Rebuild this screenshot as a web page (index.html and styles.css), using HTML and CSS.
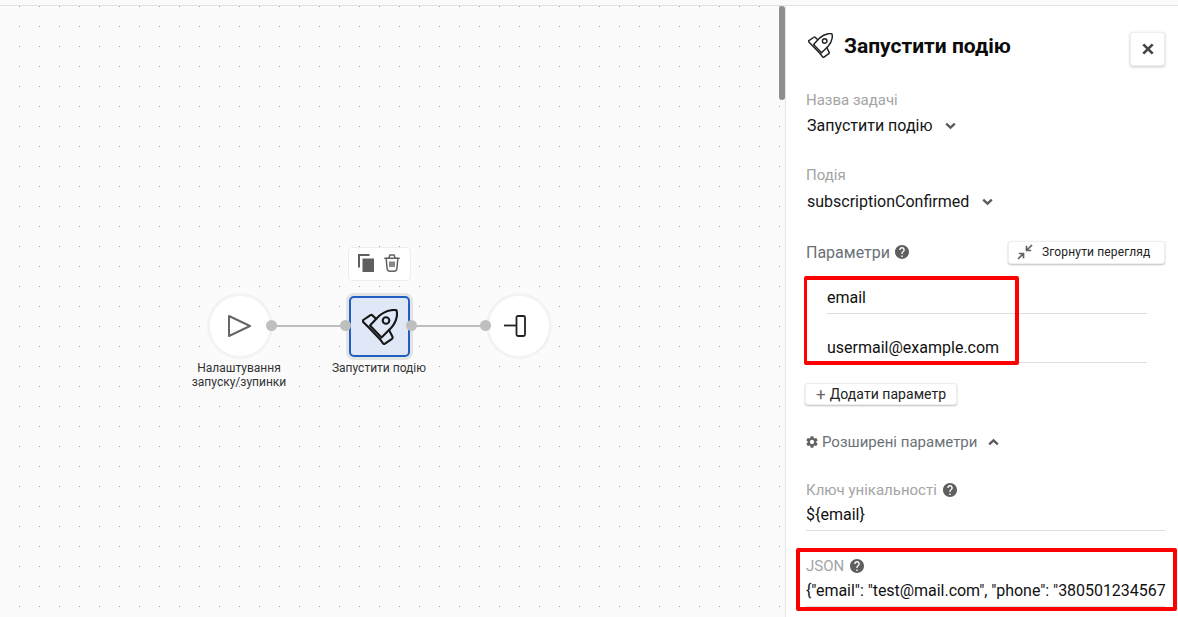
FILE: index.html
```html
<!DOCTYPE html>
<html lang="uk">
<head>
<meta charset="utf-8">
<title>Запустити подію</title>
<link rel="stylesheet" href="styles.css">
</head>
<body>
<svg class="defs" width="0" height="0" aria-hidden="true">
  <defs>
    <symbol id="rocket" viewBox="0 0 36 36">
      <g fill="none" stroke="currentColor" stroke-width="2.100" stroke-linecap="round" stroke-linejoin="round">
        <path d="M34.500 1.200C33 .8 31 .7 29 1.200 24.500 2 20.500 3.800 17 7L8 16.500 19.500 28.500 29 19C32 15.800 34 12 34.800 7.500 35.200 5.200 35 3 34.500 1.200Z"/>
        <path d="M14 9.800 10.300 6.200C9.700 5.700 9.100 5.700 8.500 6.100L1.300 11C.6 11.600.6 12.300 1.200 12.900L6.500 18.300 18 30.200"/>
        <path d="M27 21 30.500 27.800C30.800 28.600 30.600 29.300 30 29.800L23 34.700C22.300 35.200 21.600 35.100 21 34.400L18 30.200"/>
        <circle cx="24" cy="11.500" r="3.300"/>
      </g>
    </symbol>
    <symbol id="help" viewBox="2 2 20 20">
      <path fill="currentColor" d="M12 2C6.480 2 2 6.480 2 12s4.480 10 10 10 10-4.480 10-10S17.520 2 12 2zm1 17h-2v-2h2v2zm2.070-7.750l-.9.920C13.450 12.900 13 13.500 13 15h-2v-.5c0-1.100.45-2.100 1.170-2.830l1.240-1.260c.37-.36.59-.86.59-1.410 0-1.100-.9-2-2-2s-2 .9-2 2H8c0-2.210 1.790-4 4-4s4 1.790 4 4c0 .88-.36 1.680-.93 2.250z"/>
    </symbol>
    <symbol id="chev" viewBox="0 0 12 8">
      <path fill="none" stroke="currentColor" stroke-width="2.600" d="M1.300 1.500 6 5.800l4.700-4.300"/>
    </symbol>
  </defs>
</svg>

<div class="topline"></div>
<main class="app">
  <section class="canvas">
    <div class="toolbar">
      <svg class="tool-icon" viewBox="0 0 16 18"><path fill="#5f5f5f" d="M0 0h11.500v2H2v11.500H0z"/><path fill="#5f5f5f" d="M4.500 4.500H16V18H4.500z"/></svg>
      <svg class="tool-icon" viewBox="0 0 16 18"><g fill="none" stroke="#5f5f5f" stroke-width="1.500" stroke-linecap="round" stroke-linejoin="round"><path d="M.8 4.200h14.400"/><path d="M5 4 5.800 1h4.400L11 4"/><path d="M2.200 4.500 3 14c.2 1.900 1.200 3.200 3 3.200h4c1.800 0 2.800-1.300 3-3.200l.8-9.500"/><path d="M6 8v4.500M8 8v4.500M10 8v4.500"/></g></svg>
    </div>

    <span class="edge edge-a"></span>
    <span class="edge edge-b"></span>

    <div class="node circle start">
      <svg class="play" viewBox="0 0 23 22"><path fill="none" stroke="#666" stroke-width="2" stroke-linejoin="round" d="M1 1 22 11 1 21z"/></svg>
    </div>
    <div class="node square">
      <svg class="rocket-big"><use href="#rocket"/></svg>
    </div>
    <div class="node circle end">
      <svg class="stop" viewBox="0 0 22 22"><g fill="none" stroke="#222" stroke-width="1.800" stroke-linejoin="round"><path d="M0 10.500h12.500"/><rect x="12.500" y="1" width="8.500" height="20" rx="1.500"/></g></svg>
    </div>

    <span class="port p1"></span>
    <span class="port p2"></span>
    <span class="port p3"></span>
    <span class="port p4"></span>

    <div class="node-label l1">Налаштування<br>запуску/зупинки</div>
    <div class="node-label l2">Запустити подію</div>

    <div class="scrollbar"></div>
  </section>

  <aside class="panel">
    <header class="panel-head">
      <svg class="rocket-small"><use href="#rocket"/></svg>
      <h1 class="panel-title">Запустити подію</h1>
      <button class="close" type="button" aria-label="Закрити">
        <svg viewBox="0 0 12 12" class="close-icon"><path fill="none" stroke="#444" stroke-width="2.600" d="M1.300 1.300l9.400 9.400M10.700 1.300l-9.400 9.400"/></svg>
      </button>
    </header>

    <div class="field first">
      <div class="label">Назва задачі</div>
      <div class="select">Запустити подію <svg class="chev"><use href="#chev"/></svg></div>
    </div>

    <div class="field second">
      <div class="label">Подія</div>
      <div class="select">subscriptionConfirmed <svg class="chev"><use href="#chev"/></svg></div>
    </div>

    <div class="params-head">
      <span class="params-title">Параметри</span>
      <svg class="help"><use href="#help"/></svg>
      <button class="collapse" type="button">
        <svg class="collapse-icon" viewBox="0 0 16 16"><g fill="none" stroke="#616161" stroke-width="1.700"><path d="M1 15 6.500 9.500M1.800 9.500h4.700v4.700"/><path d="M15 1 9.500 6.500M14.200 6.500H9.500V1.800"/></g></svg>
        Згорнути перегляд
      </button>
    </div>

    <div class="param-list">
      <div class="param">email</div>
      <div class="param">usermail@example.com</div>
    </div>

    <button class="add" type="button"><span class="plus">+</span>Додати параметр</button>

    <div class="advanced">
      <svg class="gear" viewBox="2 2 20 20"><path fill="#616161" d="M19.140 12.940c.04-.3.06-.61.06-.94 0-.32-.02-.64-.07-.94l2.030-1.580c.18-.14.23-.41.12-.61l-1.920-3.320c-.12-.22-.37-.29-.59-.22l-2.390.96c-.5-.38-1.030-.7-1.620-.94L14.400 2.810c-.04-.24-.24-.41-.48-.41h-3.840c-.24 0-.43.17-.47.41L9.250 5.350c-.59.24-1.130.57-1.620.94L5.240 5.330c-.22-.08-.47 0-.59.22L2.740 8.870c-.12.21-.08.47.12.61l2.030 1.580c-.05.3-.09.63-.09.94s.02.64.07.94l-2.030 1.580c-.18.14-.23.41-.12.61l1.920 3.320c.12.22.37.29.59.22l2.390-.96c.5.38 1.030.7 1.620.94l.36 2.540c.05.24.24.41.48.41h3.840c.24 0 .44-.17.47-.41l.36-2.540c.59-.24 1.130-.56 1.620-.94l2.390.96c.22.08.47 0 .59-.22l1.920-3.320c.12-.22.07-.47-.12-.61l-2.010-1.580zM12 15.600c-1.980 0-3.600-1.620-3.600-3.600s1.620-3.600 3.600-3.600 3.600 1.620 3.600 3.600-1.620 3.600-3.600 3.600z"/></svg>
      <span>Розширені параметри</span>
      <svg class="chev up"><use href="#chev"/></svg>
    </div>

    <div class="field key">
      <div class="label">Ключ унікальності <svg class="help"><use href="#help"/></svg></div>
      <div class="input">${email}</div>
    </div>

    <div class="field json">
      <div class="label">JSON <svg class="help"><use href="#help"/></svg></div>
      <div class="input">{"email": "test@mail.com", "phone": "380501234567</div>
    </div>
  </aside>
</main>

<div class="mark mark-params"></div>
<div class="mark mark-json"></div>
</body>
</html>
```

FILE: styles.css
```css
* { box-sizing: border-box; }

html, body {
  margin: 0;
  height: 100%;
  overflow: hidden;
}

body {
  position: relative;
  display: flex;
  flex-direction: column;
  background: #fff;
  font-family: Roboto, "Liberation Sans", sans-serif;
  color: #111;
}

.defs { position: absolute; }

.topline {
  height: 6px;
  flex: none;
  background: #fbfbfb;
  border-bottom: 1px solid #e2e2e2;
}

.app {
  flex: 1;
  display: flex;
  min-height: 0;
}

/* canvas */
.canvas {
  position: relative;
  flex: none;
  width: 786px;
  border-right: 1px solid #e4e4e4;
  background-color: #fbfbfb;
  background-image: radial-gradient(circle at 0.5px 0.5px, #9a9a9a 0.6px, transparent 0.7px);
  background-size: 20px 20px;
  background-position: 19px 0;
}

.scrollbar {
  position: absolute;
  left: 779px;
  top: 0;
  width: 6px;
  height: 94px;
  border-radius: 3px;
  background: #8e8e8e;
}

.toolbar {
  position: absolute;
  left: 348px;
  top: 241px;
  width: 63px;
  height: 34px;
  display: flex;
  align-items: center;
  gap: 10px;
  padding: 0 0 2px 9px;
  background: #fff;
  border: 1px solid #ededed;
  border-radius: 4px;
}

.tool-icon { width: 16px; height: 18px; }

.node {
  position: absolute;
  display: flex;
  align-items: center;
  justify-content: center;
}

.circle {
  width: 60px;
  height: 60px;
  top: 290px;
  border-radius: 50%;
  background: #fff;
  box-shadow: 0 0 0 3px #f3f3f3;
}

.start { left: 210px; }
.end { left: 489px; }

.square {
  left: 349px;
  top: 290px;
  width: 61px;
  height: 61px;
  border: 2px solid #1f5fbf;
  border-radius: 5px;
  background: #e0e7f7;
  box-shadow: 0 0 0 3px #e4e4e4;
}

.play { width: 23px; height: 22px; margin-right: 1px; }
.stop { width: 22px; height: 22px; margin-right: 8px; }
.rocket-big { width: 36px; height: 36px; color: #161616; }

.edge {
  position: absolute;
  top: 319px;
  height: 2px;
  background: #bdbdbd;
}
.edge-a { left: 272px; width: 74px; }
.edge-b { left: 412px; width: 74px; }

.port {
  position: absolute;
  top: 314px;
  width: 11px;
  height: 11px;
  border-radius: 50%;
  background: #bfbfbf;
}
.p1 { left: 266px; }
.p2 { left: 340px; }
.p3 { left: 406px; }
.p4 { left: 480px; }

.node-label {
  position: absolute;
  top: 355px;
  width: 130px;
  text-align: center;
  font-size: 12px;
  line-height: 14px;
  color: #333;
}
.l1 { left: 174px; }
.l2 { left: 314px; }

/* side panel */
.panel {
  flex: 1;
  min-width: 0;
  padding: 0 13px 0 20px;
  background: #fff;
}

.panel-head {
  display: flex;
  align-items: center;
  height: 84px;
}

.rocket-small { width: 25px; height: 25px; margin: 0 0 5px 2px; color: #222; flex: none; }

.panel-title {
  flex: 1;
  margin: 0 0 5px 11px;
  font-size: 21px;
  line-height: 28px;
  font-weight: 700;
  color: #0b0b0b;
}

.close {
  width: 35px;
  height: 34px;
  padding: 0;
  margin-top: 2px;
  display: flex;
  align-items: center;
  justify-content: center;
  background: #fff;
  border: 1px solid #eee;
  border-radius: 3px;
  box-shadow: 0 1px 3px rgba(0, 0, 0, .22);
}
.close-icon { width: 12px; height: 12px; }

.label {
  font-size: 15px;
  line-height: 20px;
  color: #a4a4a4;
}

.select {
  margin-top: 4px;
  font-size: 16px;
  line-height: 24px;
  padding-left: 1px;
  color: #151515;
}

.chev { width: 11px; height: 8px; margin-left: 9px; color: #5c5c5c; vertical-align: 1px; }
.chev.up { transform: rotate(180deg); margin-left: 11px; }

.second { margin-top: 27px; }
.second .select { margin-top: 5px; }

.params-head {
  display: flex;
  align-items: center;
  margin-top: 25px;
  height: 26px;
}

.params-title { font-size: 16px; color: #6b7078; }

.help { width: 14px; height: 14px; color: #5f5f5f; vertical-align: -2px; margin-left: 2px; }
.params-head .help { margin-left: 5px; }

.collapse {
  margin-left: auto;
  width: 157px;
  height: 23px;
  padding: 0 0 0 8px;
  display: flex;
  align-items: center;
  gap: 9px;
  font: 400 12px Roboto, sans-serif;
  letter-spacing: .15px;
  color: #222;
  background: #fff;
  border: 1px solid #eee;
  border-radius: 3px;
  box-shadow: 0 1px 2px rgba(0, 0, 0, .25);
}
.collapse-icon { width: 16px; height: 16px; }

.param-list {
  margin: 8px 18px 0 21px;
}

.param {
  height: 49px;
  padding-top: 22px;
  font-size: 16px;
  line-height: 24px;
  border-bottom: 1px solid #dedede;
  color: #111;
}
.param:first-child { height: 41px; padding-top: 13px; }

.add {
  display: flex;
  align-items: center;
  margin: 20px 0 0 -1px;
  width: 152px;
  height: 22px;
  padding: 0 0 0 10px;
  font: 400 14px Roboto, sans-serif;
  letter-spacing: .05px;
  color: #222;
  background: #fff;
  border: 1px solid #eee;
  border-radius: 3px;
  box-shadow: 0 1px 2px rgba(0, 0, 0, .25);
}
.plus { font-size: 17px; font-weight: 400; color: #666; margin-right: 4px; line-height: 20px; }

.advanced {
  display: flex;
  align-items: center;
  margin-top: 26px;
  height: 22px;
  font-size: 15px;
  color: #6b7078;
}
.gear { width: 12px; height: 12px; margin-right: 4px; }

.key { margin-top: 27px; }

.input {
  height: 30px;
  margin-top: 1px;
  font-size: 16px;
  line-height: 28px;
  white-space: nowrap;
  border-bottom: 1px solid #dedede;
  color: #111;
}

.json { margin-top: 25px; }
.json .input { letter-spacing: -.04px; }

/* red annotation frames */
.mark {
  position: absolute;
  border-style: solid;
  border-color: #f00;
  border-radius: 2px;
  pointer-events: none;
}
.mark-params { left: 804px; top: 276px; width: 215px; height: 89px; border-width: 4px 4px 4px 3px; }
.mark-json { left: 796px; top: 548px; width: 381px; height: 63px; border-width: 4px; }
```
